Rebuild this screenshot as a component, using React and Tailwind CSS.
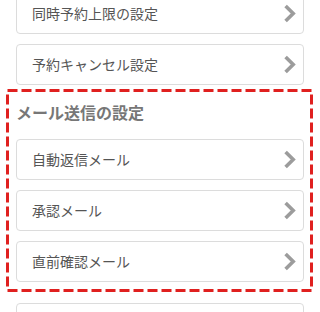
const items = ["同時予約上限の設定", "予約キャンセル設定"];
const mailItems = ["自動返信メール", "承認メール", "直前確認メール"];

function Chevron() {
    return (
        <svg width="12" height="19" viewBox="0 0 12 19" className="shrink-0">
            <path d="M1.6 2 L9.2 9.5 L1.6 17" fill="none" stroke="#9c9c9c" strokeWidth="3.6" strokeLinecap="butt" strokeLinejoin="miter" />
        </svg>
    );
}

function Row({ label, className = "" }) {
    return (
        <div className={`h-[41px] flex items-center justify-between pl-[15px] pr-[7px] bg-white border border-[#dcdcdc] rounded-[4px] ${className}`}>
            <span className="text-[14px] text-[#555]">{label}</span>
            <Chevron />
        </div>
    );
}

export default function App() {
    return (
        <div className="w-[320px] h-[312px] overflow-hidden bg-white font-['Noto_Sans_CJK_JP','Noto_Sans',sans-serif]">
            <div className="px-4 mt-[-7px] flex flex-col">
                {items.map((label, i) => (
                    <Row key={label} label={label} className={i > 0 ? "mt-[10px]" : ""} />
                ))}

                {/* highlighted section, red dashed frame drawn over it */}
                <div className="relative mt-[4px] ml-[-10px] mr-[-9px] pl-[10px] pr-[9px] pt-[11px] pb-[10px]">
                    <svg className="absolute inset-0 w-full h-full pointer-events-none" preserveAspectRatio="none">
                        <rect x="1.5" y="1.5" width="calc(100% - 3px)" height="calc(100% - 3px)" fill="none" stroke="#e0201f" strokeWidth="3" strokeDasharray="10 4" />
                    </svg>
                    <h2 className="h-[24px] leading-[24px] text-[16px] font-bold text-[#777]">メール送信の設定</h2>
                    {mailItems.map((label, i) => (
                        <Row key={label} label={label} className={i === 0 ? "mt-[15px]" : "mt-[10px]"} />
                    ))}
                </div>

                <Row label="" className="mt-[11px]" />
            </div>
        </div>
    );
}
